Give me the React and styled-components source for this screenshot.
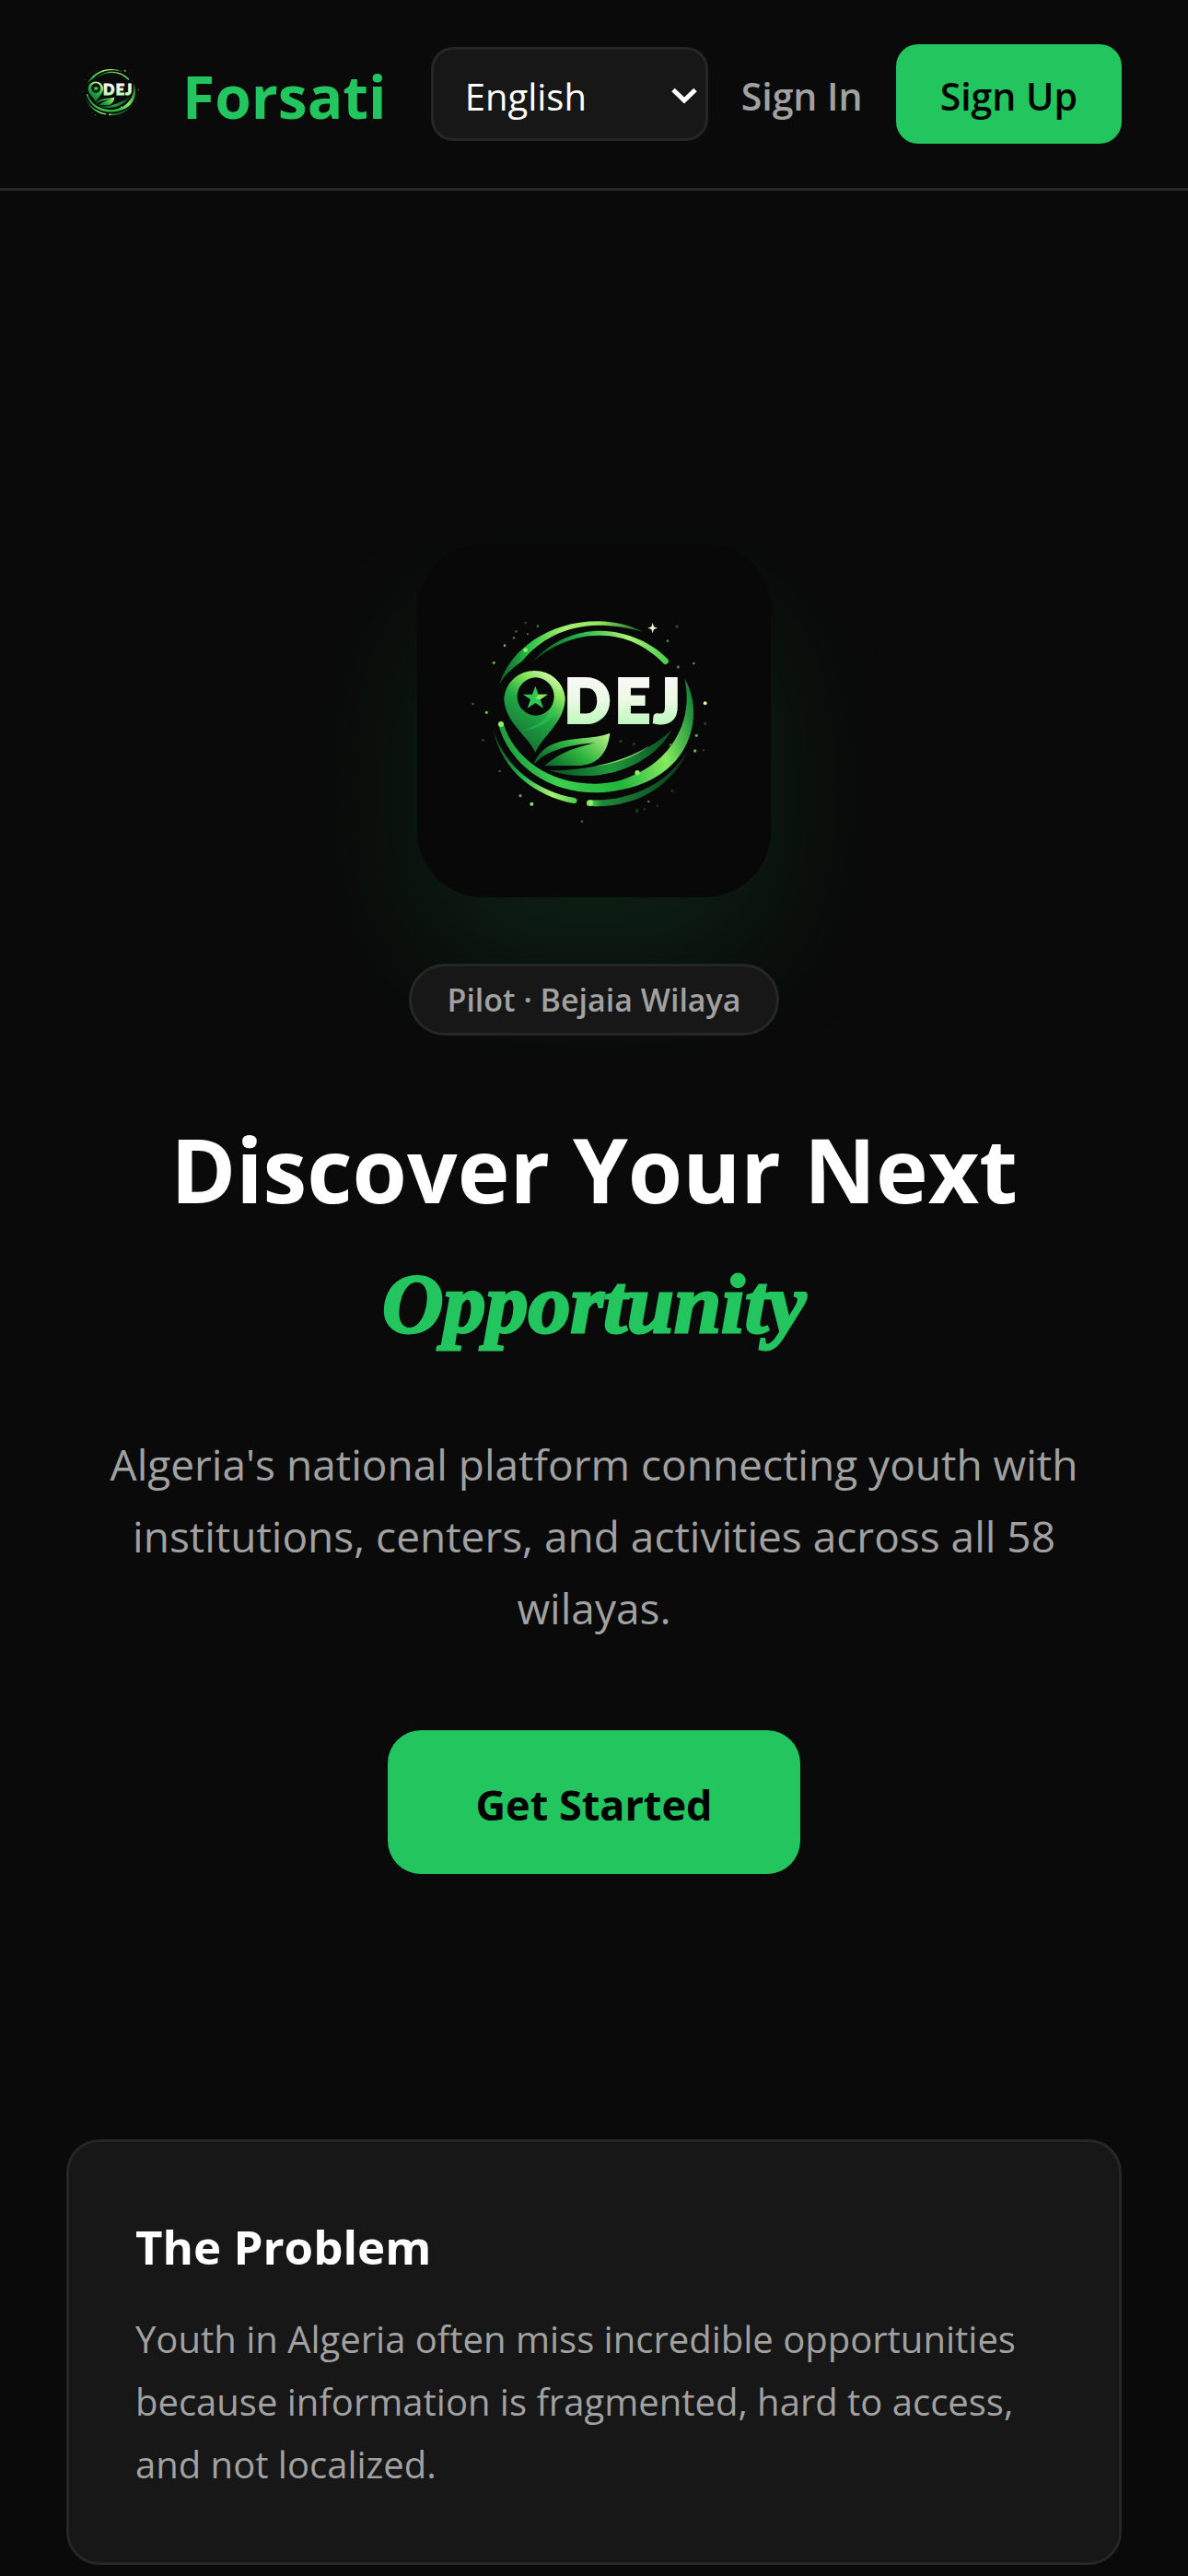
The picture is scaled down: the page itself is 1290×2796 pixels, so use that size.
import React, {useId} from 'react';
import styled, {createGlobalStyle} from 'styled-components';


function App() {
  return (
    <>
      <GlobalStyle/>
      <Header>
        <Brand href="#">
          <Logo size={96}/>
          <BrandName>Forsati</BrandName>
        </Brand>
        <Actions>
          <SelectBox>
            <Select aria-label="Language" name="language" defaultValue="en">
              <option value="en">English</option>
              <option value="fr">Français</option>
              <option value="ar">العربية</option>
            </Select>
            <Chevron viewBox="0 0 28 18" aria-hidden="true">
              <path d="M2 2.5 L14 14 L26 2.5" fill="none" stroke="#fff" strokeWidth="5"/>
            </Chevron>
          </SelectBox>
          <SignIn href="#signin">Sign In</SignIn>
          <Button type="button">Sign Up</Button>
        </Actions>
      </Header>
      <main>
        <Hero>
          <LogoTile>
            <Logo size={384}/>
          </LogoTile>
          <Badge>Pilot · Bejaia Wilaya</Badge>
          <Title>
            Discover Your Next
            <Accent>Opportunity</Accent>
          </Title>
          <Lead>
            Algeria's national platform connecting youth with institutions, centers, and activities across all 58 wilayas.
          </Lead>
          <Button type="button" $large>Get Started</Button>
        </Hero>
        <Cards>
          <Card>
            <CardTitle>The Problem</CardTitle>
            <CardText>
              Youth in Algeria often miss incredible opportunities because information is fragmented, hard to access, and not localized.
            </CardText>
          </Card>
        </Cards>
      </main>
    </>
  );
}

// x, y, radius, opacity
const sparks = [
  [112, 238, 5, 0.7], [147, 182, 4, 0.8], [177, 157, 4, 0.5], [184, 136, 4, 0.4],
  [222, 145, 3, 0.6], [255, 119, 4, 0.5], [215, 108, 4, 0.3], [678, 167, 4, 0.6],
  [708, 120, 5, 0.3], [712, 252, 5, 0.5], [763, 240, 4, 0.6], [800, 437, 4, 0.3],
  [772, 475, 5, 0.7], [767, 525, 5, 0.8], [795, 523, 3, 0.4], [687, 505, 4, 0.5],
  [525, 494, 4, 0.3], [568, 503, 4, 0.3], [44, 372, 4, 0.4], [76, 490, 4, 0.3],
  [131, 591, 4, 0.4], [198, 671, 5, 0.7], [235, 698, 6, 1], [399, 755, 4, 0.4],
  [616, 690, 4, 0.5], [578, 720, 6, 0.2], [602, 715, 4, 0.2], [644, 704, 4, 0.2],
  [693, 655, 5, 0.2], [88, 400, 5, 0.8],
];

function Logo({size}) {
  const id = useId();
  const bright = `url(#${id}bright)`;
  const sweep = `url(#${id}sweep)`;
  const rise = `url(#${id}rise)`;

  return (
    <svg width={size} height={size} viewBox="-138 -150 1152 1152" role="img" aria-label="ODEJ">
      <defs>
        <linearGradient id={`${id}bright`} x1="0" y1="0" x2="1" y2="0">
          <stop offset="0" stopColor="#0b5a26"/>
          <stop offset="0.2" stopColor="#25c045"/>
          <stop offset="0.45" stopColor="#a9ef70"/>
          <stop offset="0.7" stopColor="#8ee85a"/>
          <stop offset="1" stopColor="#0f5a28"/>
        </linearGradient>
        <linearGradient id={`${id}sweep`} x1="0" y1="0" x2="1" y2="0">
          <stop offset="0" stopColor="#0c4f24"/>
          <stop offset="0.35" stopColor="#22b84a"/>
          <stop offset="0.7" stopColor="#aaf274"/>
          <stop offset="1" stopColor="#45cf4a"/>
        </linearGradient>
        <linearGradient id={`${id}rise`} x1="127" y1="560" x2="760" y2="380" gradientUnits="userSpaceOnUse">
          <stop offset="0" stopColor="#1a8f3c"/>
          <stop offset="0.25" stopColor="#3bd04e"/>
          <stop offset="0.55" stopColor="#22b53c"/>
          <stop offset="0.8" stopColor="#86ea60"/>
          <stop offset="1" stopColor="#188a38"/>
        </linearGradient>
        <linearGradient id={`${id}pin`} x1="0.8" y1="0" x2="0.3" y2="1">
          <stop offset="0" stopColor="#e4fbc0"/>
          <stop offset="0.22" stopColor="#86e65c"/>
          <stop offset="0.5" stopColor="#23a745"/>
          <stop offset="1" stopColor="#0f6b30"/>
        </linearGradient>
        <linearGradient id={`${id}leaf`} x1="0" y1="0.6" x2="1" y2="0">
          <stop offset="0" stopColor="#0e6a2c"/>
          <stop offset="0.45" stopColor="#30b840"/>
          <stop offset="1" stopColor="#c4f58a"/>
        </linearGradient>
        <linearGradient id={`${id}tail`} x1="0" y1="0" x2="1" y2="0">
          <stop offset="0" stopColor="#7be457"/>
          <stop offset="0.15" stopColor="#1c8a3a"/>
          <stop offset="1" stopColor="#0a3a1a"/>
        </linearGradient>
        <linearGradient id={`${id}swoosh`} x1="0" y1="0" x2="1" y2="0">
          <stop offset="0" stopColor="#0b4a20"/>
          <stop offset="0.5" stopColor="#1f9a3c"/>
          <stop offset="1" stopColor="#0b4a20"/>
        </linearGradient>
        <linearGradient id={`${id}type`} x1="0" y1="290" x2="0" y2="440" gradientUnits="userSpaceOnUse">
          <stop offset="0" stopColor="#f8f8f6"/>
          <stop offset="0.45" stopColor="#ecf9e4"/>
          <stop offset="1" stopColor="#bdf8bd"/>
        </linearGradient>
      </defs>

      {/* rings */}
      <path fill={bright} d="M130 308 C165 195 290 103 450 103 C510 103 560 118 598 138 C545 122 500 116 450 116 C340 118 260 165 205 232 C168 258 148 278 130 308Z"/>
      <path fill={sweep} d="M238 235 C300 165 380 134 460 134 C550 136 630 175 678 226 A9 9 0 0 1 664 240 C610 183 540 150 460 149 C380 147 300 180 238 235Z"/>
      <path fill={rise} d="M127 440 A9 9 0 0 1 143 436 C175 545 290 633 440 632 C495 632 540 620 579 598 C685 550 765 430 733 290 C802 400 765 645 450 661 C290 663 162 570 127 440Z"/>
      <path fill={sweep} d="M110 458 C150 580 250 655 375 678 A9 9 0 0 1 372 696 C250 672 140 595 110 458Z"/>
      <path fill={`url(#${id}tail)`} d="M424 685 C560 690 680 630 742 525 C690 645 570 712 424 705 A10 10 0 0 1 424 685Z"/>
      <path fill={`url(#${id}swoosh)`} d="M290 588 C450 590 600 545 692 455 C640 560 470 645 290 588Z"/>
      <path fill="#a9f27c" opacity="0.7" d="M435 575 C500 566 570 538 620 508 C580 541 500 573 435 575Z"/>

      {/* leaf */}
      <path fill={`url(#${id}leaf)`} d="M242 568 C270 495 340 490 405 483 C440 480 468 476 490 467 C484 525 455 574 380 573 L276 574 C325 530 385 512 442 499 C360 505 290 520 242 568Z"/>

      {/* pin */}
      <path fill={`url(#${id}pin)`} fillRule="evenodd" d="M247 530 C222 475 145 430 145 352 A100 98 0 0 1 344 352 C344 430 272 475 247 530Z M308 348 A60 62 0 1 0 188 348 A60 62 0 1 0 308 348Z"/>
      <path fill="#25cf56" opacity="0.5" d="M308 375 C335 400 275 455 205 458 C250 450 290 415 308 375Z"/>
      <path fill="#2fc850" d="M247 314 L257 341 L287 341 L263 358 L273 386 L247 369 L221 386 L231 358 L207 341 L237 341Z"/>
      <path fill="#8fe85e" d="M247 355 L257 341 L287 341 L263 358Z"/>

      <LogoText x="343 508 634" y="433" fill={`url(#${id}type)`} stroke={`url(#${id}type)`}>DEJ</LogoText>

      {/* glints */}
      <g fill="#7fe85c">
        {sparks.map(([x, y, r, o]) => <circle key={`${x}-${y}`} cx={x} cy={y} r={r} opacity={o}/>)}
      </g>
      <g fill="#8df067">
        <circle cx="215" cy="197" r="7"/>
        <circle cx="135" cy="438" r="9"/>
        <circle cx="579" cy="596" r="8"/>
        <circle cx="426" cy="694" r="9"/>
      </g>
      <circle cx="800" cy="370" r="6" fill="#d3f5a8"/>
      <path fill="#e9fadf" d="M629 108 L633 121 L645 125 L633 129 L629 142 L625 129 L613 125 L625 121Z"/>
    </svg>
  );
}

const GlobalStyle = createGlobalStyle`
  *{
    box-sizing:border-box;
  }
  body{
    margin:0;
    background:#0a0a0a;
    color:#fff;
    font-family:"Open Sans", "Noto Sans", sans-serif;
  }
`

const Header = styled.header`
  display:flex;
  align-items:center;
  justify-content:space-between;
  padding:48px 72px;
  border-bottom:3px solid #262626;
`

const Brand = styled.a`
  display:flex;
  align-items:center;
  gap:30px;
  color:#22c55e;
  text-decoration:none;
`

const BrandName = styled.span`
  padding-top:6px;
  font-size:64px;
  line-height:96px;
  font-weight:700;
`

const Actions = styled.div`
  display:flex;
  align-items:center;
  gap:36px;
`

const SelectBox = styled.div`
  position:relative;
`

const Select = styled.select`
  appearance:none;
  display:block;
  width:301px;
  height:102px;
  padding:4px 72px 0 34px;
  background:#171717;
  color:#fff;
  border:3px solid #262626;
  border-radius:24px;
  font-family:inherit;
  font-size:40px;
  outline:none;
`

const Chevron = styled.svg`
  position:absolute;
  right:12px;
  top:44px;
  width:28px;
  height:18px;
  pointer-events:none;
`

const SignIn = styled.a`
  padding-top:4px;
  color:#a1a1a1;
  font-size:41px;
  font-weight:600;
  text-decoration:none;
  white-space:nowrap;
`

const Button = styled.button`
  height:${props => props.$large ? '156px' : '108px'};
  padding:4px ${props => props.$large ? '96px' : '48px'} 0;
  background:#22c55e;
  color:#000;
  border:none;
  border-radius:${props => props.$large ? '36px' : '24px'};
  font-family:inherit;
  font-size:${props => props.$large ? '45px' : '41px'};
  font-weight:${props => props.$large ? 700 : 600};
  white-space:nowrap;
  cursor:pointer;
`

const Hero = styled.section`
  display:flex;
  flex-direction:column;
  align-items:center;
  padding:383px 72px 288px;
  text-align:center;
`

const LogoTile = styled.div`
  display:flex;
  margin-bottom:72px;
  background:#080808;
  border-radius:72px;
  box-shadow:0 75px 150px rgba(34, 197, 94, 0.13);
`

const LogoText = styled.text`
  font-family:Lato, sans-serif;
  font-size:194px;
  font-weight:900;
  stroke-width:12px;
`

const Badge = styled.span`
  padding:0 38px;
  background:#171717;
  color:#a1a1a1;
  border:3px solid #262626;
  border-radius:39px;
  font-size:34px;
  line-height:72px;
  font-weight:600;
`

const Title = styled.h1`
  margin:72px 0 62px;
  font-size:96px;
  line-height:146px;
  font-weight:700;
`

const Accent = styled.span`
  display:block;
  color:#22c55e;
  font-family:"Liberation Serif", serif;
  font-style:italic;
  font-size:92px;
  -webkit-text-stroke:3px #22c55e;
`

const Lead = styled.p`
  max-width:1100px;
  margin:0 0 94px;
  color:#a1a1a1;
  font-size:46px;
  line-height:78px;
`

const Cards = styled.section`
  display:grid;
  gap:48px;
  padding:0 72px 48px;
`

const Card = styled.article`
  padding:72px;
  background:#171717;
  border:3px solid #262626;
  border-radius:36px;
`

const CardTitle = styled.h2`
  margin:0 0 26px;
  font-size:51px;
  line-height:82px;
  font-weight:700;
`

const CardText = styled.p`
  margin:0;
  color:#a1a1a1;
  font-size:40px;
  line-height:68px;
`


export default App;
